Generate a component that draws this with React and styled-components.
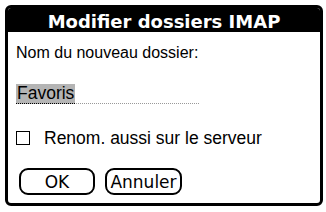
import React from "react";
import styled, { createGlobalStyle } from "styled-components";

const Global = createGlobalStyle`
  html, body { margin: 0; padding: 0; background: #fff; }
  body { font-family: "Liberation Sans", Arial, sans-serif; color: #000; }
`;

const Dialog = styled.div`
  box-sizing: border-box;
  margin: 5px 0 0 5px;
  width: 318px;
  height: 201px;
  border: 3px solid #000;
  border-radius: 6px;
  overflow: hidden;
  display: flex;
  flex-direction: column;
  background: #fff;
`;

const TitleBar = styled.div`
  height: 24px;
  background: #000;
  color: #fff;
  font-family: "DejaVu Sans", sans-serif;
  font-weight: bold;
  font-size: 18px;
  display: flex;
  align-items: center;
  justify-content: center;
  padding-top: 2px;
  box-sizing: border-box;
`;

const Body = styled.div`
  flex: 1;
  display: flex;
  flex-direction: column;
  padding: 0 0 0 8px;
`;

const Label = styled.div`
  font-size: 16px;
  line-height: 18px;
  margin-top: 12px;
`;

const Field = styled.div`
  margin-top: 22px;
  width: 183px;
  height: 19px;
  display: flex;
  align-items: flex-end;
  border-bottom: 1px dotted #999;
`;

const Selected = styled.span`
  background: #b4b4b4;
  font-size: 17.5px;
  line-height: 19px;
  padding: 0 1px;
  border-bottom: 1px dotted #000;
  margin-bottom: -1px;
`;

const CheckRow = styled.label`
  margin-top: 26px;
  display: flex;
  align-items: center;
  font-size: 17.5px;
  line-height: 16px;
`;

const Box = styled.span`
  box-sizing: border-box;
  width: 14px;
  height: 14px;
  border: 1.5px solid #000;
  margin-right: 14px;
`;

const Buttons = styled.div`
  margin-top: 22px;
  display: flex;
  gap: 10px;
  padding-left: 3px;
`;

const Button = styled.button`
  box-sizing: border-box;
  width: ${(p) => p.$w}px;
  height: 27px;
  border: 2px solid #000;
  border-radius: 9px;
  background: #fff;
  font-family: "DejaVu Sans", sans-serif;
  font-size: 17px;
  color: #000;
  padding: 0;
  display: flex;
  align-items: center;
  justify-content: center;
`;

export default function App() {
  return (
    <>
      <Global />
      <Dialog>
        <TitleBar>Modifier dossiers IMAP</TitleBar>
        <Body>
          <Label>Nom du nouveau dossier:</Label>
          <Field>
            <Selected>Favoris</Selected>
          </Field>
          <CheckRow>
            <Box />
            Renom. aussi sur le serveur
          </CheckRow>
          <Buttons>
            <Button $w={76}>OK</Button>
            <Button $w={77}>Annuler</Button>
          </Buttons>
        </Body>
      </Dialog>
    </>
  );
}
